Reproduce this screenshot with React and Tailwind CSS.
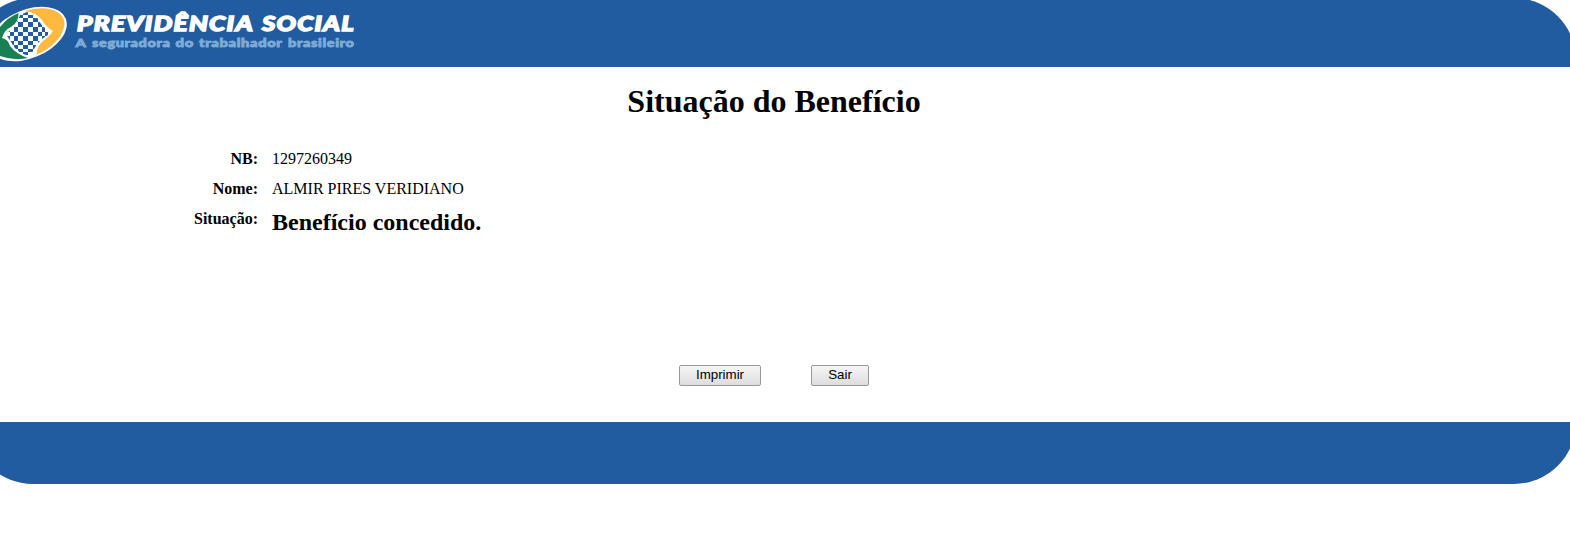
const columns = [7, 10, 14, 18, 23, 28, 33, 38, 42, 45, 48];
const rows = [12, 15, 18, 22, 27, 32, 36, 41, 45, 49, 52, 55];

const squares = rows.slice(0, -1).flatMap((y, r) =>
  columns.slice(0, -1)
    .map((x, c) => ({ x, y, w: columns[c + 1] - x, h: rows[r + 1] - y, on: (r + c) % 2 === 0 }))
    .filter((s) => s.on)
);

function Logo() {
  return (
    <svg width="370" height="67" viewBox="0 0 370 67" className="block" role="img" aria-label="Previdência Social">
      <clipPath id="globe">
        <path d="M20 15 L27 12 Q35 14 38 19 Q41 26 48 30 L48 35 Q42 38 37 44 Q33 50 31 55 L26 55 Q18 52 14 47 Q11 41 7 36 L7 33 Q17 26 20 15 Z" />
      </clipPath>
      <g transform="rotate(-22.5 28 34)">
        <ellipse cx="28" cy="34" rx="40.8" ry="24.2" fill="#fff" />
      </g>
      <path d="M0 27 Q8 17 18.5 13 Q19 22 11 27 Q4 30 2 38 Q8 39 10 46 Q16 54 28 58 Q14 61 0 56 Z" fill="#188052" />
      <path d="M24 11 Q38 7 50 9 Q64.5 13 64.5 24 Q63.5 35 53.5 44 Q46 51 36.5 54.5 Q37 46 43 41 Q50 36 53 31 Q46 27 42 20 Q36 12 24 11 Z" fill="#ffb840" />
      <g clipPath="url(#globe)" fill="#215ba0">
        {squares.map((s) => (
          <rect key={`${s.x}-${s.y}`} x={s.x} y={s.y} width={s.w} height={s.h} />
        ))}
      </g>
      <g fill="#fff" stroke="#fff" strokeWidth="1.4" className="font-['Lato',sans-serif] text-[20px] font-black tracking-[1px] italic">
        <text x="77" y="31.4" textLength="177" lengthAdjust="spacingAndGlyphs">PREVIDÊNCIA</text>
        <text x="262" y="31.4" textLength="93" lengthAdjust="spacingAndGlyphs">SOCIAL</text>
      </g>
      <g fill="#7fabd8" stroke="#7fabd8" strokeWidth="0.8" className="font-['Lato',sans-serif] text-[11.5px] font-black tracking-[0.5px]">
        <text x="75.5" y="46.7" textLength="11" lengthAdjust="spacingAndGlyphs">A</text>
        <text x="92" y="46.7" textLength="78.5" lengthAdjust="spacingAndGlyphs">seguradora</text>
        <text x="175.5" y="46.7" textLength="18.5" lengthAdjust="spacingAndGlyphs">do</text>
        <text x="199" y="46.7" textLength="83.5" lengthAdjust="spacingAndGlyphs">trabalhador</text>
        <text x="288" y="46.7" textLength="66.5" lengthAdjust="spacingAndGlyphs">brasileiro</text>
      </g>
    </svg>
  );
}

function Row({ label, children }) {
  return (
    <div className="flex h-[30px] items-start">
      <dt className="w-[258px] text-right font-bold">{label}</dt>
      <dd className="ml-[14px]">{children}</dd>
    </div>
  );
}

function Button({ children, className }) {
  return (
    <button className={`h-[21px] rounded-[2px] border border-[#999] bg-linear-to-b from-[#f6f6f6] to-[#dddddd] pb-px text-center font-['Liberation_Sans',sans-serif] text-[13.333px] leading-[18px] ${className}`}>
      {children}
    </button>
  );
}

export default function App() {
  return (
    <div className="flex h-[540px] w-[1570px] flex-col overflow-hidden bg-white font-['Liberation_Serif',serif] text-base leading-[18px] text-black">
      <header className="h-[67px] overflow-hidden">
        <div className="-mt-0.5 -mr-1.5 -ml-[29px] h-[69px] rounded-t-[62px] bg-[#215ba0] pt-0.5 pl-[29px]">
          <Logo />
        </div>
      </header>
      <main className="h-[355px] pt-4">
        <h1 className="w-[1548px] text-center text-[32px] leading-[37px] font-bold">Situação do Benefício</h1>
        <dl className="mt-[30px]">
          <Row label="NB:">1297260349</Row>
          <Row label="Nome:">ALMIR PIRES VERIDIANO</Row>
          <Row label="Situação:">
            <span className="block text-2xl leading-[25px] font-bold">Benefício concedido.</span>
          </Row>
        </dl>
        <div className="mt-[125px] flex w-[1548px] justify-center gap-[50px]">
          <Button className="w-[82px]">Imprimir</Button>
          <Button className="w-[58px]">Sair</Button>
        </div>
      </main>
      <footer className="h-[62px] overflow-hidden">
        <div className="-mr-1.5 -ml-[29px] h-[62px] rounded-b-[62px] bg-[#215ba0]" />
      </footer>
    </div>
  );
}
